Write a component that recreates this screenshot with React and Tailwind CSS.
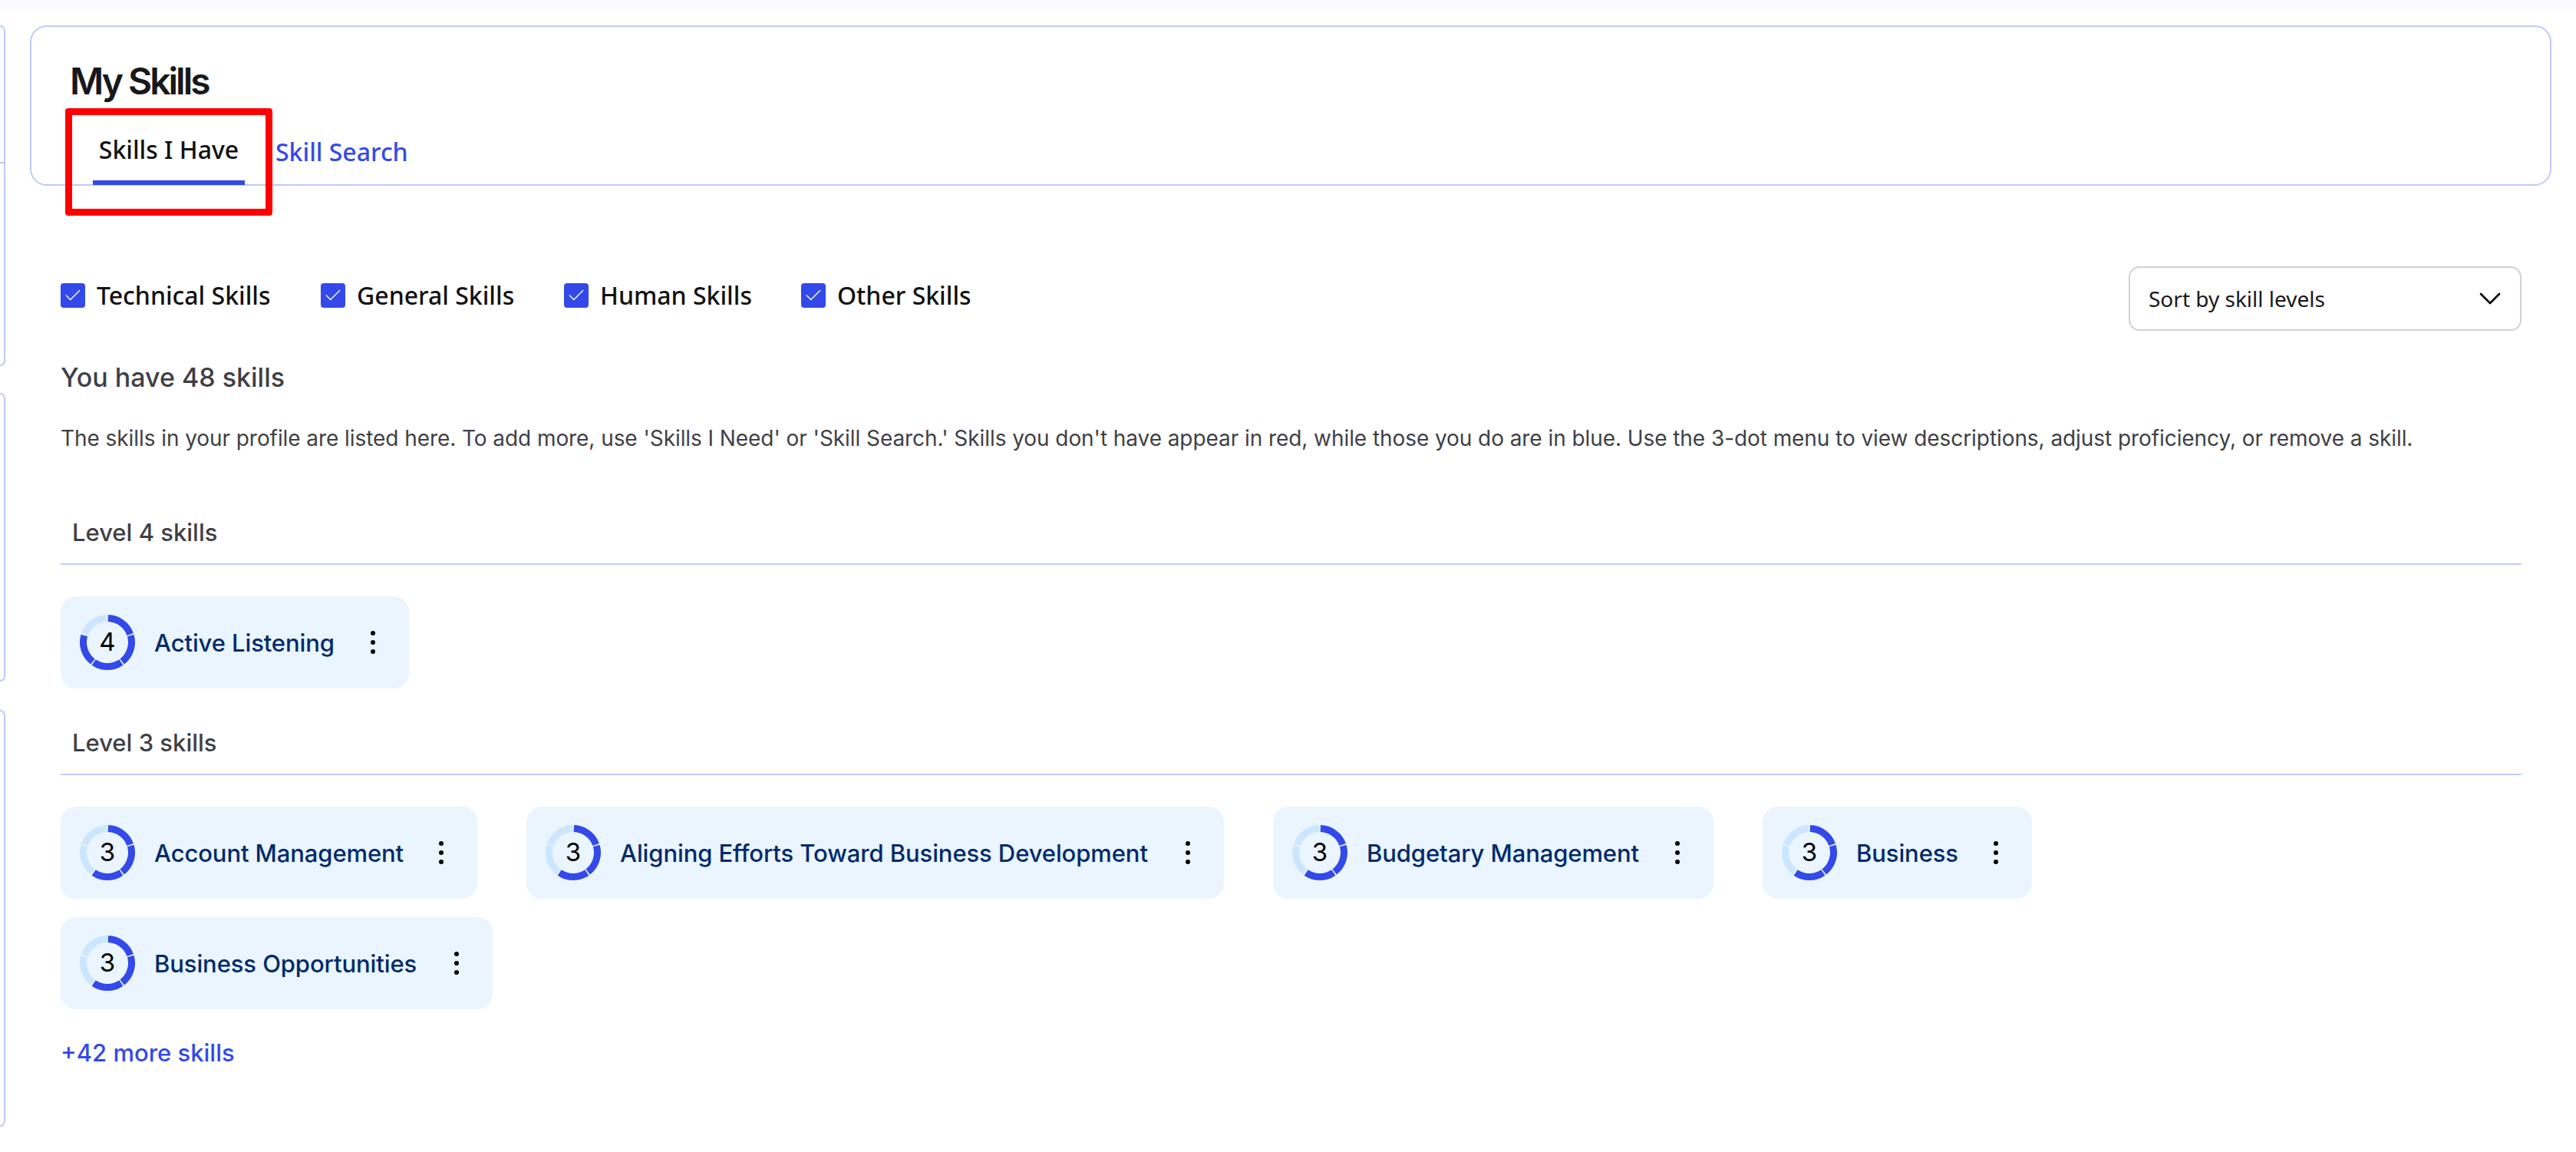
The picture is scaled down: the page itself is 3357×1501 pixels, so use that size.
import { Check, ChevronDown } from "lucide-react";

const filters = [
  { label: "Technical Skills", width: "w-[339px]" },
  { label: "General Skills", width: "w-[317px]" },
  { label: "Human Skills", width: "w-[309px]" },
  { label: "Other Skills", width: "" },
];

const levelThree = [
  { name: "Account Management", width: "w-[543px]" },
  { name: "Aligning Efforts Toward Business Development", width: "w-[909px]" },
  { name: "Budgetary Management", width: "w-[574px]" },
  { name: "Business", width: "w-[351px]" },
  { name: "Business Opportunities", width: "w-[563px]" },
];

function segment(i) {
  const r = 31.5;
  const from = ((i * 72 + 1.5 - 90) * Math.PI) / 180;
  const to = ((i * 72 + 70.5 - 90) * Math.PI) / 180;
  const x1 = 36 + r * Math.cos(from);
  const y1 = 36 + r * Math.sin(from);
  const x2 = 36 + r * Math.cos(to);
  const y2 = 36 + r * Math.sin(to);
  return `M${x1} ${y1}A${r} ${r} 0 0 1 ${x2} ${y2}`;
}

function Ring({ level }) {
  return (
    <div className="relative h-[72px] w-[72px] shrink-0">
      <svg width="72" height="72" viewBox="0 0 72 72" fill="none">
        {[0, 1, 2, 3, 4].map((i) => (
          <path key={i} d={segment(i)} strokeWidth="9" stroke={i < level ? "#3349ea" : "#cce6ff"} />
        ))}
      </svg>
      <span className="absolute inset-0 flex items-center justify-center font-['Inter',sans-serif] text-[33px] text-black">
        {level}
      </span>
    </div>
  );
}

function Dots() {
  return (
    <div className="ml-auto flex flex-col gap-[6px]">
      <span className="h-[6px] w-[6px] rounded-full bg-black" />
      <span className="h-[6px] w-[6px] rounded-full bg-black" />
      <span className="h-[6px] w-[6px] rounded-full bg-black" />
    </div>
  );
}

function Chip({ level, name, width }) {
  return (
    <div className={`flex h-[120px] items-center rounded-[20px] bg-[#eaf5ff] pl-[25px] pr-[44px] ${width}`}>
      <Ring level={level} />
      <span className="ml-[25px] whitespace-nowrap pt-[2px] text-[31px] font-medium tracking-[-0.1px] text-[#002a6b]">{name}</span>
      <Dots />
    </div>
  );
}

function LevelHeading({ children }) {
  return (
    <div className="border-b-2 border-[#c3ccf7] pb-[22px] pl-[15px] text-[31px] leading-[36px] font-medium text-[#3f3f46]">
      {children}
    </div>
  );
}

export default function App() {
  return (
    <div className="flex h-[1501px] w-[3357px] flex-col overflow-hidden bg-white font-['Inter',sans-serif]">
      <div className="h-[14px] bg-[#fbfbff]" />
      <div className="flex flex-1 pt-[19px]">
        <aside className="flex w-[7px] flex-col">
          <div className="h-[444px] overflow-hidden rounded-r-[14px] border-2 border-l-0 border-[#bfc9f7]">
            <div className="h-[178px] border-b-2 border-[#bfc9f7] bg-[#fafbff]" />
          </div>
          <div className="mt-[35px] h-[376px] rounded-r-[14px] border-2 border-l-0 border-[#bfc9f7]" />
          <div className="mt-[37px] h-[543px] rounded-r-[14px] border-2 border-l-0 border-[#bfc9f7]" />
        </aside>

        <main className="ml-[32px] w-[3286px]">
          <header className="h-[209px] rounded-[22px] border-2 border-[#bfc9f7] pl-[50px] pt-[42px]">
            <h1 className="text-[48px] leading-[58px] font-semibold tracking-[-3px] text-[#18181b]">My Skills</h1>
            <div className="mt-[38px] ml-[30px] flex">
              <div className="relative h-[52px] w-[198px]">
                <div className="text-center font-['Noto_Sans',sans-serif] text-[32px] leading-[44px] font-medium text-[#111]">
                  Skills I Have
                </div>
                <div className="absolute bottom-[-16px] left-0 right-0 h-[6px] bg-[#3349ea]" />
                <div className="absolute left-[-36px] right-[-36px] top-[-32px] bottom-[-56px] rounded-[4px] border-[9px] border-[#ff0000]" />
              </div>
              <div className="ml-[40px] pt-[3px] font-['Noto_Sans',sans-serif] text-[32px] leading-[44px] font-medium text-[#3349ea]">
                Skill Search
              </div>
            </div>
          </header>

          <section className="ml-[40px] mr-[39px] pt-[105px]">
            <div className="flex items-center justify-between">
              <div className="mb-[8px] flex items-center">
                {filters.map((f) => (
                  <label
                    key={f.label}
                    className={`flex items-center gap-[15px] font-['Noto_Sans',sans-serif] text-[32px] font-medium text-[#111] ${f.width}`}
                  >
                    <span className="flex h-[32px] w-[32px] items-center justify-center rounded-[4px] bg-[#3349ea]">
                      <Check size={26} strokeWidth={1.3} className="text-white" />
                    </span>
                    {f.label}
                  </label>
                ))}
              </div>
              <button className="flex h-[84px] w-[512px] items-center justify-between rounded-[14px] border-2 border-[#d1d1d6] pl-[24px] pr-[15px] font-['Noto_Sans',sans-serif] text-[28px] text-[#18181b]">
                Sort by skill levels
                <ChevronDown size={48} strokeWidth={1.3} className="text-black" />
              </button>
            </div>

            <p className="mt-[38px] text-[34px] leading-[46px] font-medium text-[#3f3f46]">You have 48 skills</p>
            <p className="mt-[38px] whitespace-nowrap text-[28px] leading-[36px] tracking-[-0.07px] text-[#3f3f46]">
              The skills in your profile are listed here. To add more, use 'Skills I Need' or 'Skill Search.' Skills you don't have appear in red, while those you do are in blue. Use the 3-dot menu to view descriptions, adjust proficiency, or remove a skill.
            </p>

            <div className="mt-[87px]">
              <LevelHeading>Level 4 skills</LevelHeading>
            </div>
            <div className="mt-[41px] flex">
              <Chip level={4} name="Active Listening" width="w-[454px]" />
            </div>

            <div className="mt-[53px]">
              <LevelHeading>Level 3 skills</LevelHeading>
            </div>
            <div className="mt-[41px] flex max-w-[3100px] flex-wrap gap-x-[64px] gap-y-[24px]">
              {levelThree.map((s) => (
                <Chip key={s.name} level={3} name={s.name} width={s.width} />
              ))}
            </div>

            <a className="mt-[35px] block text-[31px] leading-[44px] font-medium text-[#3349ea]">+42 more skills</a>
          </section>
        </main>
      </div>
    </div>
  );
}
